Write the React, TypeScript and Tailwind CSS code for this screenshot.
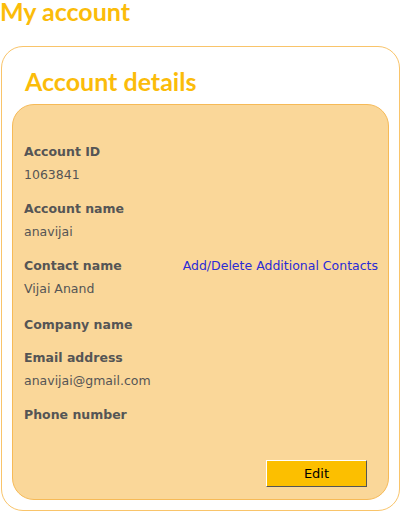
import React from 'react'

const FIELDS: { label: string; value?: string; link?: string }[] = [
  { label: 'Account ID', value: '1063841' },
  { label: 'Account name', value: 'anavijai' },
  { label: 'Contact name', value: 'Vijai Anand', link: 'Add/Delete Additional Contacts' },
  { label: 'Company name' },
  { label: 'Email address', value: 'anavijai@gmail.com' },
  { label: 'Phone number' },
]

export default function App() {
  return (
    <div className="w-[401px] h-[512px] bg-white overflow-hidden" style={{ fontFamily: '"DejaVu Sans", Verdana, sans-serif' }}>
      <h1 className="text-[25px] leading-[22px] font-bold text-[#fbbc0a]" style={{ fontFamily: 'Lato, "Open Sans", sans-serif' }}>
        My account
      </h1>
      <div className="mt-[24px] ml-px mr-px h-[465px] border border-[#f9c46a] rounded-[22px] px-[10px] pt-[16px]">
        <h2 className="pl-[13px] text-[25px] leading-[36px] font-bold text-[#fbbc0a]" style={{ fontFamily: 'Lato, "Open Sans", sans-serif' }}>
          Account details
        </h2>
        <div className="mt-[5px] h-[396px] bg-[#fad799] border border-[#f6ba57] rounded-[22px] pl-[11px] pr-[10px] pt-[37px] flex flex-col text-[12.5px] text-[#555555]">
          {FIELDS.map((f) => (
            <div key={f.label} className={f.link ? 'mb-[14px]' : f.value ? 'mb-[12px]' : 'mb-[13px]'}>
              <div className="flex items-center justify-between h-[20px]">
                <span className="font-bold">{f.label}</span>
                {f.link && <span className="text-[#2b2bd6]">{f.link}</span>}
              </div>
              {f.value && <div className="mt-[2px] h-[23px] flex items-center">{f.value}</div>}
            </div>
          ))}
          <div className="flex justify-end pr-[11px] mt-[22px]">
            <button className="w-[101px] h-[27px] bg-[#fcbf00] border border-t-white border-l-white border-r-[#555] border-b-[#555] text-[13px] text-black" style={{ fontFamily: 'Tahoma, "DejaVu Sans", sans-serif' }}>
              Edit
            </button>
          </div>
        </div>
      </div>
    </div>
  )
}
